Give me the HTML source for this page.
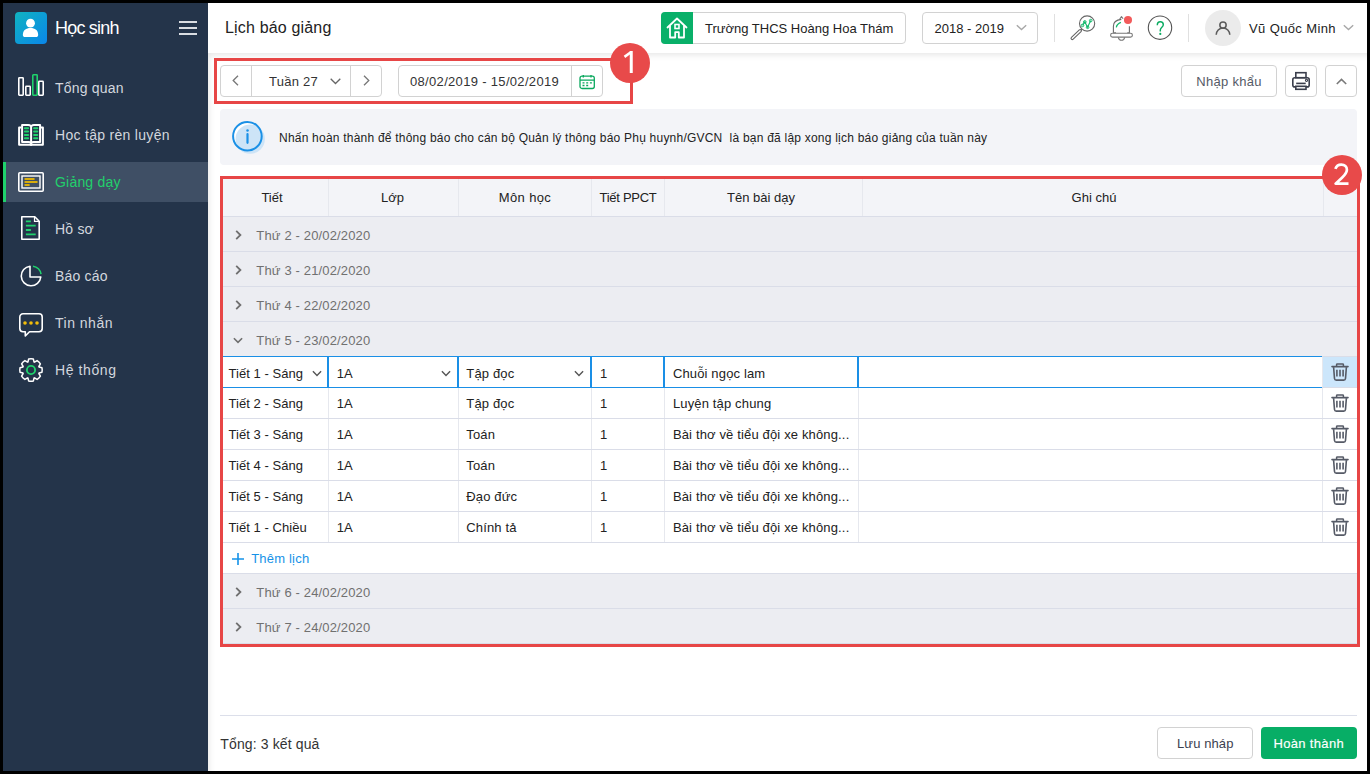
<!DOCTYPE html>
<html><head><meta charset="utf-8">
<style>
*{box-sizing:border-box;margin:0;padding:0}
html,body{width:1370px;height:774px;overflow:hidden;background:#000;font-family:"Liberation Sans",sans-serif;position:relative}
.a{position:absolute}
.t{position:absolute;white-space:pre;line-height:1}
svg{position:absolute;overflow:visible}
.nav{color:#d3d7de;font-size:14px}
.bx{position:absolute;border:1px solid #d2d2d2;border-radius:4px;background:#fff}
.vl{position:absolute;width:1px}
.hl{position:absolute;height:1px}
.c13{font-size:13px;color:#222}
.gt{font-size:13px;color:#707070}
</style></head><body>
<!-- main white area -->
<div class="a" style="left:3px;top:3px;width:1364px;height:768px;background:#fff"></div>
<!-- content shadow -->
<div class="a" style="left:208px;top:53px;width:1159px;height:718px;box-shadow:inset 4px 5px 6px -3px rgba(0,0,0,0.10)"></div>

<!-- SIDEBAR -->
<div class="a" style="left:3px;top:3px;width:205px;height:768px;background:#24344a"></div>
<div class="a" style="left:15px;top:12px;width:32px;height:32px;border-radius:4px;background:linear-gradient(135deg,#10b3c0,#0a86ea)"></div>
<svg style="left:15px;top:12px" width="32" height="32" viewBox="0 0 32 32"><circle cx="15.5" cy="11.2" r="4.4" fill="#fff"/><path d="M7.9 22.3C7.9 18.3 11 16 15.5 16S23.1 18.3 23.1 22.3v.9c0 1.1-.9 1.9-1.9 1.9H9.8c-1 0-1.9-.8-1.9-1.9z" fill="#fff"/></svg>
<div class="t" style="left:55px;top:19px;font-size:18px;color:#fff;letter-spacing:-0.8px">Học sinh</div>
<div class="a" style="left:179.2px;top:21px;width:17.7px;height:2px;background:#dadde2"></div>
<div class="a" style="left:179.2px;top:27px;width:17.7px;height:2px;background:#dadde2"></div>
<div class="a" style="left:179.2px;top:33px;width:17.7px;height:2px;background:#dadde2"></div>

<!-- active row -->
<div class="a" style="left:3px;top:162px;width:205px;height:40px;background:#3f4f65"></div>
<div class="a" style="left:3px;top:162px;width:3px;height:40px;background:#1fd26c"></div>

<div class="t nav" style="left:55px;top:81.3px;letter-spacing:0.2px">Tổng quan</div>
<div class="t nav" style="left:55px;top:128.3px;letter-spacing:0.3px">Học tập rèn luyện</div>
<div class="t nav" style="left:55px;top:175.3px;color:#22cf6c;letter-spacing:0.2px">Giảng dạy</div>
<div class="t nav" style="left:55px;top:222.3px;letter-spacing:0.2px">Hồ sơ</div>
<div class="t nav" style="left:55px;top:269.3px;letter-spacing:0.2px">Báo cáo</div>
<div class="t nav" style="left:55px;top:316.3px;letter-spacing:0.5px">Tin nhắn</div>
<div class="t nav" style="left:55px;top:363.3px;letter-spacing:0.6px">Hệ thống</div>

<!-- nav icons -->
<svg style="left:18px;top:74px" width="26" height="22" viewBox="0 0 26 22" fill="none" stroke-width="1.6">
  <rect x="0.8" y="3.8" width="4.4" height="17.4" rx="0.6" stroke="#fff"/>
  <rect x="7.8" y="12.3" width="4.4" height="8.9" rx="0.6" stroke="#fff"/>
  <rect x="14.8" y="0.8" width="4.4" height="20.4" rx="0.6" stroke="#1fd26c"/>
  <rect x="20.8" y="7.3" width="4.4" height="13.9" rx="0.6" stroke="#fff"/>
</svg>
<svg style="left:18px;top:124px" width="26" height="22" viewBox="0 0 26 22" fill="none">
  <path d="M3.3 3.6H1.1v17.2h23.8V3.6h-2.2" stroke="#fff" stroke-width="2" stroke-linejoin="round"/>
  <path d="M13.1 2.2C12.2 1.4 11.4 1 10.2 1H4.1v17h6.4c1.2 0 2 .4 2.6 1.1" stroke="#fff" stroke-width="2" stroke-linejoin="round"/>
  <path d="M13.1 2.2C14 1.4 14.8 1 16 1h6.1v17h-6.4c-1.2 0-2 .4-2.6 1.1" stroke="#fff" stroke-width="2" stroke-linejoin="round"/>
  <path d="M13.1 2v19.8" stroke="#fff" stroke-width="2"/>
  <path d="M6.9 4.2h3.2M6.9 7.5h3.2M6.9 10.9h3.2M6.9 14.2h3.2M16.1 4.2h3.2M16.1 7.5h3.2M16.1 10.9h3.2M16.1 14.2h3.2" stroke="#1fd26c" stroke-width="2" stroke-linecap="round"/>
</svg>
<svg style="left:18px;top:172px" width="26" height="20" viewBox="0 0 26 20" fill="none">
  <rect x="0.8" y="0.8" width="24.4" height="18.4" rx="1" stroke="#fff" stroke-width="1.6"/>
  <rect x="4" y="4" width="18" height="12" stroke="#fff" stroke-width="1.4"/>
  <path d="M7.3 7h8.5M7.3 9.9h11.5M7.3 13h3.6" stroke="#d9ad0c" stroke-width="2" stroke-linecap="round"/>
</svg>
<svg style="left:21px;top:216px" width="19" height="24" viewBox="0 0 19 24" fill="none">
  <path d="M0.8 0.8h13l4.4 4.4v18H0.8z" stroke="#fff" stroke-width="1.6" stroke-linejoin="round"/>
  <path d="M13.5 1v4.4h4.4" stroke="#fff" stroke-width="1.2"/>
  <path d="M4.9 5.4h5M4.9 9.6h9.8M4.9 14h5M4.9 18.4h9.8" stroke="#1fd26c" stroke-width="1.9"/>
</svg>
<svg style="left:20px;top:265px" width="22" height="22" viewBox="0 0 22 22" fill="none">
  <path d="M10 1.2A9.8 9.8 0 1 0 20.8 12H10z" stroke="#fff" stroke-width="1.6" stroke-linejoin="round"/>
  <path d="M13 1.2a9 9 0 0 1 8 8" stroke="#1fd26c" stroke-width="1.6"/>
</svg>
<svg style="left:19px;top:313px" width="24" height="24" viewBox="0 0 24 24" fill="none">
  <path d="M4 .8h16c1.8 0 3.2 1.4 3.2 3.2v11.6c0 1.8-1.4 3.2-3.2 3.2H10.5l-4.2 4.2v-4.2H4c-1.8 0-3.2-1.4-3.2-3.2V4C.8 2.2 2.2.8 4 .8z" stroke="#fff" stroke-width="1.6" stroke-linejoin="round"/>
  <circle cx="6" cy="10" r="1.8" fill="#f2bd0b"/><circle cx="12" cy="10" r="1.8" fill="#f2bd0b"/><circle cx="18" cy="10" r="1.8" fill="#f2bd0b"/>
</svg>
<svg style="left:19px;top:358px" width="24" height="24" viewBox="0 0 24 24" fill="none">
  <path d="M8.92 3.97L9.67 1.04A11.2 11.2 0 0 1 14.33 1.04L15.08 3.97A8.6 8.6 0 0 1 15.50 4.14L18.10 2.61A11.2 11.2 0 0 1 21.39 5.90L19.86 8.50A8.6 8.6 0 0 1 20.03 8.92L22.96 9.67A11.2 11.2 0 0 1 22.96 14.33L20.03 15.08A8.6 8.6 0 0 1 19.86 15.50L21.39 18.10A11.2 11.2 0 0 1 18.10 21.39L15.50 19.86A8.6 8.6 0 0 1 15.08 20.03L14.33 22.96A11.2 11.2 0 0 1 9.67 22.96L8.92 20.03A8.6 8.6 0 0 1 8.50 19.86L5.90 21.39A11.2 11.2 0 0 1 2.61 18.10L4.14 15.50A8.6 8.6 0 0 1 3.97 15.08L1.04 14.33A11.2 11.2 0 0 1 1.04 9.67L3.97 8.92A8.6 8.6 0 0 1 4.14 8.50L2.61 5.90A11.2 11.2 0 0 1 5.90 2.61L8.50 4.14A8.6 8.6 0 0 1 8.92 3.97Z" stroke="#fff" stroke-width="1.5" stroke-linejoin="round"/>
  <circle cx="12" cy="12" r="4.1" stroke="#1fd26c" stroke-width="1.9"/>
</svg>

<!-- HEADER -->
<div class="t" style="left:225px;top:20.2px;font-size:16px;color:#222;letter-spacing:0.17px">Lịch báo giảng</div>
<div class="bx" style="left:661px;top:12px;width:245px;height:32px"></div>
<div class="a" style="left:661px;top:12px;width:32px;height:32px;background:#09b069;border-radius:4px 0 0 4px"></div>
<svg style="left:661px;top:12px" width="32" height="32" viewBox="0 0 32 32" fill="none">
  <path d="M6.5 15.5L16 6.5l9.5 9" stroke="#fff" stroke-width="1.8" stroke-linecap="round" stroke-linejoin="round"/>
  <path d="M9 13.5V25.5h5.2v-5.3h3.6v5.3H23V13.5" stroke="#fff" stroke-width="1.8" stroke-linejoin="round"/>
  <rect x="14" y="12.5" width="4" height="4" stroke="#fff" stroke-width="1.6"/>
</svg>
<div class="t c13" style="left:705px;top:22px;color:#222">Trường THCS Hoàng Hoa Thám</div>
<div class="bx" style="left:922px;top:12px;width:116px;height:32px"></div>
<div class="t c13" style="left:934.5px;top:22px;color:#222">2018 - 2019</div>
<svg style="left:1015.5px;top:24px" width="11" height="7" viewBox="0 0 11 7" fill="none"><path d="M.8 1.2l4.7 4.4 4.7-4.4" stroke="#a8a8a8" stroke-width="1.4"/></svg>
<div class="vl" style="left:1054px;top:14px;height:28px;background:#e0e0e0"></div>
<div class="vl" style="left:1188px;top:14px;height:28px;background:#e0e0e0"></div>
<!-- magnifier -->
<svg style="left:1068px;top:13px" width="30" height="30" viewBox="0 0 30 30" fill="none">
  <circle cx="19.1" cy="10.5" r="7.6" stroke="#666" stroke-width="1.1"/>
  <path d="M4.3 25.3L12.2 17.8" stroke="#666" stroke-width="3.6" stroke-linecap="round"/>
  <path d="M4.3 25.3L12.2 17.8" stroke="#fff" stroke-width="1.4" stroke-linecap="round"/>
  <path d="M12.8 17.3l1.2-1.3" stroke="#666" stroke-width="1.1"/>
  <path d="M14.5 12.4l2.3-3.5 2.8 5.4 3.1-6.7" stroke="#10b86a" stroke-width="1.1"/>
  <circle cx="14.5" cy="12.4" r="1.3" stroke="#10b86a" stroke-width="1"/><circle cx="16.8" cy="8.9" r="1.3" stroke="#10b86a" stroke-width="1"/><circle cx="19.6" cy="14.3" r="1.3" stroke="#10b86a" stroke-width="1"/><circle cx="22.7" cy="7.6" r="1.3" stroke="#10b86a" stroke-width="1"/>
</svg>
<!-- bell -->
<svg style="left:1108px;top:13px" width="30" height="30" viewBox="0 0 30 30" fill="none">
  <path d="M5.4 19.8V13.2C5.4 9.6 8.3 6.9 13.3 6.4" stroke="#6a6a6a" stroke-width="1.1"/>
  <path d="M11.6 6.2l1.9-2.6 1.6 2.2" stroke="#777" stroke-width="1.1" stroke-linejoin="round"/>
  <path d="M21.4 13.3v6.5" stroke="#6a6a6a" stroke-width="1.1"/>
  <path d="M5 19.8h3M19.3 19.8h2.6" stroke="#777" stroke-width="1.1"/>
  <rect x="2.6" y="20.3" width="21.8" height="3.8" rx="1.9" stroke="#777" stroke-width="1.1"/>
  <path d="M10.3 24.3c.4 1.9 1.6 3 3.2 3s2.8-1.1 3.2-3" stroke="#777" stroke-width="1.1"/>
  <path d="M8.3 14.3C8.8 11.9 10.5 10.3 12.9 9.4" stroke="#10b86a" stroke-width="1.3"/>
  <circle cx="20" cy="7" r="4.05" fill="#f25a5a"/>
</svg>
<!-- help -->
<svg style="left:1147px;top:15px" width="26" height="26" viewBox="0 0 26 26" fill="none">
  <circle cx="13" cy="12.7" r="11.7" stroke="#555" stroke-width="1.1"/>
  <path d="M10.3 10.2c0-2.2 1.3-3.4 3-3.4s3 1.1 3 2.9c0 2.5-3 2.6-3 5.3v1.5" stroke="#0bab62" stroke-width="1.45"/>
  <circle cx="13.3" cy="18.9" r="1.1" fill="#0bab62"/>
</svg>
<!-- user -->
<div class="a" style="left:1205px;top:9.6px;width:36px;height:36px;border-radius:50%;background:#ebebeb"></div>
<svg style="left:1205px;top:9.6px" width="36" height="36" viewBox="0 0 36 36" fill="none">
  <circle cx="18" cy="15.05" r="3.15" stroke="#5c5c5c" stroke-width="1.55"/>
  <path d="M11.2 24.8A6.8 6.8 0 0 1 24.8 24.8" stroke="#5c5c5c" stroke-width="1.55"/>
</svg>
<div class="t c13" style="left:1249px;top:21.9px;color:#222;letter-spacing:0.38px">Vũ Quốc Minh</div>
<svg style="left:1342.5px;top:24px" width="11" height="7" viewBox="0 0 11 7" fill="none"><path d="M.8 1.2l4.7 4.4 4.7-4.4" stroke="#a8a8a8" stroke-width="1.4"/></svg>

<!-- TOOLBAR -->
<div class="bx" style="left:220px;top:65px;width:162px;height:32px"></div>
<div class="vl" style="left:251px;top:65px;height:32px;background:#d2d2d2"></div>
<div class="vl" style="left:350px;top:65px;height:32px;background:#d2d2d2"></div>
<svg style="left:232px;top:75px" width="7" height="11" viewBox="0 0 7 11" fill="none"><path d="M6 .7L1.2 5.5 6 10.3" stroke="#777" stroke-width="1.3"/></svg>
<svg style="left:363px;top:75px" width="7" height="11" viewBox="0 0 7 11" fill="none"><path d="M1 .7l4.8 4.8L1 10.3" stroke="#777" stroke-width="1.3"/></svg>
<div class="t c13" style="left:269px;top:74.5px;color:#333;letter-spacing:0.25px">Tuần 27</div>
<svg style="left:330px;top:78px" width="11" height="7" viewBox="0 0 11 7" fill="none"><path d="M.7.7l4.8 4.8L10.3.7" stroke="#666" stroke-width="1.3"/></svg>
<div class="bx" style="left:398px;top:65px;width:205px;height:32px"></div>
<div class="vl" style="left:571px;top:65px;height:32px;background:#d2d2d2"></div>
<div class="t c13" style="left:410px;top:74.6px;color:#333;letter-spacing:0.32px">08/02/2019 - 15/02/2019</div>
<svg style="left:579px;top:74px" width="17" height="16" viewBox="0 0 17 16" fill="none">
  <rect x="1" y="2.2" width="14.3" height="12.3" rx="2" stroke="#0aa85e" stroke-width="1.3"/>
  <path d="M1 6.1h14.3M4.3 1v2.5M12 1v2.5" stroke="#0aa85e" stroke-width="1.3"/>
  <path d="M3.5 8.9h2M7.2 8.9h2M10.9 8.9h2M3.5 11.5h2M7.2 11.5h2" stroke="#0aa85e" stroke-width="1.3"/>
</svg>
<!-- right toolbar -->
<div class="bx" style="left:1181px;top:65px;width:96px;height:32px"></div>
<div class="t c13" style="left:1196.3px;top:75px;color:#555a66;letter-spacing:0.3px">Nhập khẩu</div>
<div class="bx" style="left:1285px;top:65px;width:32px;height:32px"></div>
<svg style="left:1290px;top:70px" width="22" height="22" viewBox="0 0 22 22" fill="none">
  <rect x="5.8" y="2.7" width="10.2" height="5" stroke="#3a3e4c" stroke-width="1.6"/>
  <rect x="2.8" y="7.8" width="16.4" height="9.1" rx="2" stroke="#3a3e4c" stroke-width="1.6"/>
  <rect x="5.8" y="16.3" width="10.2" height="3" fill="#fff" stroke="#3a3e4c" stroke-width="1.6"/>
  <path d="M6.2 13.4h9.5" stroke="#3a3e4c" stroke-width="1.6"/>
  <circle cx="16.5" cy="10.3" r="1.1" stroke="#3a3e4c" stroke-width="1.1"/>
</svg>
<div class="bx" style="left:1325px;top:65px;width:32px;height:32px"></div>
<svg style="left:1336px;top:78px" width="11" height="7" viewBox="0 0 11 7" fill="none"><path d="M.8 6l4.7-4.6L10.2 6" stroke="#7a7a7a" stroke-width="1.6"/></svg>

<!-- annotation 1 -->
<div class="a" style="left:214px;top:58px;width:419px;height:46px;border:3px solid #e74646"></div>
<div class="a" style="left:610px;top:42.6px;width:40px;height:40px;border-radius:50%;background:#e84a4a"></div>
<svg style="left:610px;top:42px" width="40" height="40" viewBox="0 0 40 40" fill="none"><path d="M21.25 9v22" stroke="#fff" stroke-width="3"/><path d="M20.8 10.3l-6.3 4.6" stroke="#fff" stroke-width="2.6"/></svg>

<!-- INFO -->
<div class="a" style="left:220px;top:109px;width:1137px;height:56px;background:#f3f4f8;border-radius:4px"></div>
<svg style="left:231px;top:120px" width="36" height="36" viewBox="0 0 36 36" fill="none">
  <circle cx="16.4" cy="16.2" r="14.3" fill="#fff"/>
  <circle cx="19.2" cy="19.1" r="14.7" fill="#cde4f7"/>
  <circle cx="16.4" cy="16.2" r="14.3" stroke="#1a90e6" stroke-width="2"/>
  <circle cx="16.5" cy="10.4" r="1.25" fill="#1a90e6"/>
  <path d="M16.5 14v8.8" stroke="#1a90e6" stroke-width="2.2" stroke-linecap="round"/>
</svg>
<div class="t" style="left:279px;top:131.5px;font-size:12px;color:#222;letter-spacing:0.22px">Nhấn hoàn thành để thông báo cho cán bộ Quản lý thông báo Phụ huynh/GVCN  là bạn đã lập xong lịch báo giảng của tuần này</div>

<!-- TABLE -->
<div class="a" style="left:223px;top:179px;width:1134px;height:37px;background:#f3f4f8;"></div>
<div class="a" style="left:223px;top:216px;width:1134px;height:1px;background:#dadde8;"></div>
<div class="a" style="left:328px;top:179px;width:1px;height:37px;background:#e6e8ee;"></div>
<div class="a" style="left:458px;top:179px;width:1px;height:37px;background:#e6e8ee;"></div>
<div class="a" style="left:591px;top:179px;width:1px;height:37px;background:#e6e8ee;"></div>
<div class="a" style="left:664px;top:179px;width:1px;height:37px;background:#e6e8ee;"></div>
<div class="a" style="left:862px;top:179px;width:1px;height:37px;background:#e6e8ee;"></div>
<div class="a" style="left:1323px;top:179px;width:1px;height:37px;background:#e6e8ee;"></div>
<div class="t" style="left:172px;width:200px;text-align:center;top:190.8px;font-size:13px;color:#222;letter-spacing:0px">Tiết</div>
<div class="t" style="left:292.6px;width:200px;text-align:center;top:190.8px;font-size:13px;color:#222;letter-spacing:0px">Lớp</div>
<div class="t" style="left:425px;width:200px;text-align:center;top:190.8px;font-size:13px;color:#222;letter-spacing:0.35px">Môn học</div>
<div class="t" style="left:528px;width:200px;text-align:center;top:190.8px;font-size:13px;color:#222;letter-spacing:-0.3px">Tiết PPCT</div>
<div class="t" style="left:661px;width:200px;text-align:center;top:190.8px;font-size:13px;color:#222;letter-spacing:0px">Tên bài dạy</div>
<div class="t" style="left:994px;width:200px;text-align:center;top:190.8px;font-size:13px;color:#222;letter-spacing:0px">Ghi chú</div>
<div class="a" style="left:223px;top:217px;width:1134px;height:34px;background:#ecedf2;"></div>
<div class="a" style="left:223px;top:251px;width:1134px;height:1px;background:#dadde8;"></div>
<svg style="left:234.5px;top:230px" width="7" height="10" viewBox="0 0 7 10" fill="none"><path d="M1.2 .9l4.2 4.1-4.2 4.1" stroke="#6f6f6f" stroke-width="1.8"/></svg>
<div class="t" style="left:256.3px;top:229.0px;font-size:13px;color:#707070;letter-spacing:0.15px;">Thứ 2 - 20/02/2020</div>
<div class="a" style="left:223px;top:252px;width:1134px;height:34px;background:#ecedf2;"></div>
<div class="a" style="left:223px;top:286px;width:1134px;height:1px;background:#dadde8;"></div>
<svg style="left:234.5px;top:265px" width="7" height="10" viewBox="0 0 7 10" fill="none"><path d="M1.2 .9l4.2 4.1-4.2 4.1" stroke="#6f6f6f" stroke-width="1.8"/></svg>
<div class="t" style="left:256.3px;top:264.0px;font-size:13px;color:#707070;letter-spacing:0.15px;">Thứ 3 - 21/02/2020</div>
<div class="a" style="left:223px;top:287px;width:1134px;height:34px;background:#ecedf2;"></div>
<div class="a" style="left:223px;top:321px;width:1134px;height:1px;background:#dadde8;"></div>
<svg style="left:234.5px;top:300px" width="7" height="10" viewBox="0 0 7 10" fill="none"><path d="M1.2 .9l4.2 4.1-4.2 4.1" stroke="#6f6f6f" stroke-width="1.8"/></svg>
<div class="t" style="left:256.3px;top:299.0px;font-size:13px;color:#707070;letter-spacing:0.15px;">Thứ 4 - 22/02/2020</div>
<div class="a" style="left:223px;top:322px;width:1134px;height:34px;background:#ecedf2;"></div>
<div class="a" style="left:223px;top:356px;width:1134px;height:1px;background:#dadde8;"></div>
<svg style="left:233px;top:336.5px" width="10" height="7" viewBox="0 0 10 7" fill="none"><path d="M.9 1.2L5 5.4l4.1-4.2" stroke="#6f6f6f" stroke-width="1.6"/></svg>
<div class="t" style="left:256.3px;top:334.0px;font-size:13px;color:#707070;letter-spacing:0.15px;">Thứ 5 - 23/02/2020</div>
<div class="a" style="left:1323px;top:357px;width:34px;height:30px;background:#cce6fb;"></div>
<div class="a" style="left:223px;top:387px;width:1134px;height:1px;background:#dadde8;"></div>
<div class="a" style="left:328px;top:357px;width:1px;height:30px;background:#e6e8ee;"></div>
<div class="a" style="left:458px;top:357px;width:1px;height:30px;background:#e6e8ee;"></div>
<div class="a" style="left:591px;top:357px;width:1px;height:30px;background:#e6e8ee;"></div>
<div class="a" style="left:664px;top:357px;width:1px;height:30px;background:#e6e8ee;"></div>
<div class="a" style="left:858px;top:357px;width:1px;height:30px;background:#e6e8ee;"></div>
<div class="a" style="left:1322px;top:357px;width:1px;height:30px;background:#e6e8ee;"></div>
<div class="t" style="left:228.5px;top:366.5px;font-size:13px;color:#222;letter-spacing:0.05px;">Tiết 1 - Sáng</div>
<div class="t" style="left:336.7px;top:366.5px;font-size:13px;color:#222;letter-spacing:0.15px;">1A</div>
<div class="t" style="left:466.3px;top:366.5px;font-size:13px;color:#222;letter-spacing:0.15px;">Tập đọc</div>
<div class="t" style="left:600px;top:366.5px;font-size:13px;color:#222;letter-spacing:0.15px;">1</div>
<div class="t" style="left:672.9px;top:366.5px;font-size:13px;color:#222;letter-spacing:0.15px;">Chuỗi ngọc lam</div>
<svg style="left:1331px;top:362.8px" width="18" height="18" viewBox="0 0 18 18" fill="none"><path d="M1 3.6h16" stroke="#555a66" stroke-width="1.6" stroke-linecap="round"/><path d="M5.6 3.2V1.6c0-.4.3-.7.7-.7h5.4c.4 0 .7.3.7.7v1.6" stroke="#555a66" stroke-width="1.5"/><path d="M2.6 4.1l.9 11.4c.1 1 .8 1.6 1.7 1.6h7.6c.9 0 1.6-.6 1.7-1.6l.9-11.4" stroke="#555a66" stroke-width="1.6"/><path d="M5.9 6.8v6.7M9 6.8v6.7M12.1 6.8v6.7" stroke="#555a66" stroke-width="1.6"/></svg>
<div class="a" style="left:223px;top:418px;width:1134px;height:1px;background:#dadde8;"></div>
<div class="a" style="left:328px;top:388px;width:1px;height:30px;background:#e6e8ee;"></div>
<div class="a" style="left:458px;top:388px;width:1px;height:30px;background:#e6e8ee;"></div>
<div class="a" style="left:591px;top:388px;width:1px;height:30px;background:#e6e8ee;"></div>
<div class="a" style="left:664px;top:388px;width:1px;height:30px;background:#e6e8ee;"></div>
<div class="a" style="left:858px;top:388px;width:1px;height:30px;background:#e6e8ee;"></div>
<div class="a" style="left:1322px;top:388px;width:1px;height:30px;background:#e6e8ee;"></div>
<div class="t" style="left:228.5px;top:396.6px;font-size:13px;color:#222;letter-spacing:0.05px;">Tiết 2 - Sáng</div>
<div class="t" style="left:336.7px;top:396.6px;font-size:13px;color:#222;letter-spacing:0.15px;">1A</div>
<div class="t" style="left:466.3px;top:396.6px;font-size:13px;color:#222;letter-spacing:0.15px;">Tập đọc</div>
<div class="t" style="left:600px;top:396.6px;font-size:13px;color:#222;letter-spacing:0.15px;">1</div>
<div class="t" style="left:672.9px;top:396.6px;font-size:13px;color:#222;letter-spacing:0.15px;">Luyện tập chung</div>
<svg style="left:1331px;top:393.8px" width="18" height="18" viewBox="0 0 18 18" fill="none"><path d="M1 3.6h16" stroke="#555a66" stroke-width="1.6" stroke-linecap="round"/><path d="M5.6 3.2V1.6c0-.4.3-.7.7-.7h5.4c.4 0 .7.3.7.7v1.6" stroke="#555a66" stroke-width="1.5"/><path d="M2.6 4.1l.9 11.4c.1 1 .8 1.6 1.7 1.6h7.6c.9 0 1.6-.6 1.7-1.6l.9-11.4" stroke="#555a66" stroke-width="1.6"/><path d="M5.9 6.8v6.7M9 6.8v6.7M12.1 6.8v6.7" stroke="#555a66" stroke-width="1.6"/></svg>
<div class="a" style="left:223px;top:449px;width:1134px;height:1px;background:#dadde8;"></div>
<div class="a" style="left:328px;top:419px;width:1px;height:30px;background:#e6e8ee;"></div>
<div class="a" style="left:458px;top:419px;width:1px;height:30px;background:#e6e8ee;"></div>
<div class="a" style="left:591px;top:419px;width:1px;height:30px;background:#e6e8ee;"></div>
<div class="a" style="left:664px;top:419px;width:1px;height:30px;background:#e6e8ee;"></div>
<div class="a" style="left:858px;top:419px;width:1px;height:30px;background:#e6e8ee;"></div>
<div class="a" style="left:1322px;top:419px;width:1px;height:30px;background:#e6e8ee;"></div>
<div class="t" style="left:228.5px;top:427.6px;font-size:13px;color:#222;letter-spacing:0.05px;">Tiết 3 - Sáng</div>
<div class="t" style="left:336.7px;top:427.6px;font-size:13px;color:#222;letter-spacing:0.15px;">1A</div>
<div class="t" style="left:466.3px;top:427.6px;font-size:13px;color:#222;letter-spacing:0.15px;">Toán</div>
<div class="t" style="left:600px;top:427.6px;font-size:13px;color:#222;letter-spacing:0.15px;">1</div>
<div class="t" style="left:672.9px;top:427.6px;font-size:13px;color:#222;letter-spacing:0.15px;">Bài thơ về tiểu đội xe không...</div>
<svg style="left:1331px;top:424.8px" width="18" height="18" viewBox="0 0 18 18" fill="none"><path d="M1 3.6h16" stroke="#555a66" stroke-width="1.6" stroke-linecap="round"/><path d="M5.6 3.2V1.6c0-.4.3-.7.7-.7h5.4c.4 0 .7.3.7.7v1.6" stroke="#555a66" stroke-width="1.5"/><path d="M2.6 4.1l.9 11.4c.1 1 .8 1.6 1.7 1.6h7.6c.9 0 1.6-.6 1.7-1.6l.9-11.4" stroke="#555a66" stroke-width="1.6"/><path d="M5.9 6.8v6.7M9 6.8v6.7M12.1 6.8v6.7" stroke="#555a66" stroke-width="1.6"/></svg>
<div class="a" style="left:223px;top:480px;width:1134px;height:1px;background:#dadde8;"></div>
<div class="a" style="left:328px;top:450px;width:1px;height:30px;background:#e6e8ee;"></div>
<div class="a" style="left:458px;top:450px;width:1px;height:30px;background:#e6e8ee;"></div>
<div class="a" style="left:591px;top:450px;width:1px;height:30px;background:#e6e8ee;"></div>
<div class="a" style="left:664px;top:450px;width:1px;height:30px;background:#e6e8ee;"></div>
<div class="a" style="left:858px;top:450px;width:1px;height:30px;background:#e6e8ee;"></div>
<div class="a" style="left:1322px;top:450px;width:1px;height:30px;background:#e6e8ee;"></div>
<div class="t" style="left:228.5px;top:458.6px;font-size:13px;color:#222;letter-spacing:0.05px;">Tiết 4 - Sáng</div>
<div class="t" style="left:336.7px;top:458.6px;font-size:13px;color:#222;letter-spacing:0.15px;">1A</div>
<div class="t" style="left:466.3px;top:458.6px;font-size:13px;color:#222;letter-spacing:0.15px;">Toán</div>
<div class="t" style="left:600px;top:458.6px;font-size:13px;color:#222;letter-spacing:0.15px;">1</div>
<div class="t" style="left:672.9px;top:458.6px;font-size:13px;color:#222;letter-spacing:0.15px;">Bài thơ về tiểu đội xe không...</div>
<svg style="left:1331px;top:455.8px" width="18" height="18" viewBox="0 0 18 18" fill="none"><path d="M1 3.6h16" stroke="#555a66" stroke-width="1.6" stroke-linecap="round"/><path d="M5.6 3.2V1.6c0-.4.3-.7.7-.7h5.4c.4 0 .7.3.7.7v1.6" stroke="#555a66" stroke-width="1.5"/><path d="M2.6 4.1l.9 11.4c.1 1 .8 1.6 1.7 1.6h7.6c.9 0 1.6-.6 1.7-1.6l.9-11.4" stroke="#555a66" stroke-width="1.6"/><path d="M5.9 6.8v6.7M9 6.8v6.7M12.1 6.8v6.7" stroke="#555a66" stroke-width="1.6"/></svg>
<div class="a" style="left:223px;top:511px;width:1134px;height:1px;background:#dadde8;"></div>
<div class="a" style="left:328px;top:481px;width:1px;height:30px;background:#e6e8ee;"></div>
<div class="a" style="left:458px;top:481px;width:1px;height:30px;background:#e6e8ee;"></div>
<div class="a" style="left:591px;top:481px;width:1px;height:30px;background:#e6e8ee;"></div>
<div class="a" style="left:664px;top:481px;width:1px;height:30px;background:#e6e8ee;"></div>
<div class="a" style="left:858px;top:481px;width:1px;height:30px;background:#e6e8ee;"></div>
<div class="a" style="left:1322px;top:481px;width:1px;height:30px;background:#e6e8ee;"></div>
<div class="t" style="left:228.5px;top:489.6px;font-size:13px;color:#222;letter-spacing:0.05px;">Tiết 5 - Sáng</div>
<div class="t" style="left:336.7px;top:489.6px;font-size:13px;color:#222;letter-spacing:0.15px;">1A</div>
<div class="t" style="left:466.3px;top:489.6px;font-size:13px;color:#222;letter-spacing:0.15px;">Đạo đức</div>
<div class="t" style="left:600px;top:489.6px;font-size:13px;color:#222;letter-spacing:0.15px;">1</div>
<div class="t" style="left:672.9px;top:489.6px;font-size:13px;color:#222;letter-spacing:0.15px;">Bài thơ về tiểu đội xe không...</div>
<svg style="left:1331px;top:486.8px" width="18" height="18" viewBox="0 0 18 18" fill="none"><path d="M1 3.6h16" stroke="#555a66" stroke-width="1.6" stroke-linecap="round"/><path d="M5.6 3.2V1.6c0-.4.3-.7.7-.7h5.4c.4 0 .7.3.7.7v1.6" stroke="#555a66" stroke-width="1.5"/><path d="M2.6 4.1l.9 11.4c.1 1 .8 1.6 1.7 1.6h7.6c.9 0 1.6-.6 1.7-1.6l.9-11.4" stroke="#555a66" stroke-width="1.6"/><path d="M5.9 6.8v6.7M9 6.8v6.7M12.1 6.8v6.7" stroke="#555a66" stroke-width="1.6"/></svg>
<div class="a" style="left:223px;top:542px;width:1134px;height:1px;background:#dadde8;"></div>
<div class="a" style="left:328px;top:512px;width:1px;height:30px;background:#e6e8ee;"></div>
<div class="a" style="left:458px;top:512px;width:1px;height:30px;background:#e6e8ee;"></div>
<div class="a" style="left:591px;top:512px;width:1px;height:30px;background:#e6e8ee;"></div>
<div class="a" style="left:664px;top:512px;width:1px;height:30px;background:#e6e8ee;"></div>
<div class="a" style="left:858px;top:512px;width:1px;height:30px;background:#e6e8ee;"></div>
<div class="a" style="left:1322px;top:512px;width:1px;height:30px;background:#e6e8ee;"></div>
<div class="t" style="left:228.5px;top:520.6px;font-size:13px;color:#222;letter-spacing:0.05px;">Tiết 1 - Chiều</div>
<div class="t" style="left:336.7px;top:520.6px;font-size:13px;color:#222;letter-spacing:0.15px;">1A</div>
<div class="t" style="left:466.3px;top:520.6px;font-size:13px;color:#222;letter-spacing:0.15px;">Chính tả</div>
<div class="t" style="left:600px;top:520.6px;font-size:13px;color:#222;letter-spacing:0.15px;">1</div>
<div class="t" style="left:672.9px;top:520.6px;font-size:13px;color:#222;letter-spacing:0.15px;">Bài thơ về tiểu đội xe không...</div>
<svg style="left:1331px;top:517.8px" width="18" height="18" viewBox="0 0 18 18" fill="none"><path d="M1 3.6h16" stroke="#555a66" stroke-width="1.6" stroke-linecap="round"/><path d="M5.6 3.2V1.6c0-.4.3-.7.7-.7h5.4c.4 0 .7.3.7.7v1.6" stroke="#555a66" stroke-width="1.5"/><path d="M2.6 4.1l.9 11.4c.1 1 .8 1.6 1.7 1.6h7.6c.9 0 1.6-.6 1.7-1.6l.9-11.4" stroke="#555a66" stroke-width="1.6"/><path d="M5.9 6.8v6.7M9 6.8v6.7M12.1 6.8v6.7" stroke="#555a66" stroke-width="1.6"/></svg>
<div class="a" style="left:223px;top:356px;width:1099px;height:1px;background:#1a8fe6;"></div>
<div class="a" style="left:223px;top:387px;width:1099px;height:1px;background:#1a8fe6;"></div>
<div class="a" style="left:327px;top:356px;width:2px;height:32px;background:#1a8fe6;"></div>
<div class="a" style="left:457px;top:356px;width:2px;height:32px;background:#1a8fe6;"></div>
<div class="a" style="left:590px;top:356px;width:2px;height:32px;background:#1a8fe6;"></div>
<div class="a" style="left:663px;top:356px;width:2px;height:32px;background:#1a8fe6;"></div>
<div class="a" style="left:857px;top:356px;width:2px;height:32px;background:#1a8fe6;"></div>
<svg style="left:311.5px;top:370px" width="10" height="7" viewBox="0 0 10 7" fill="none"><path d="M.9 1.2L5 5.4l4.1-4.2" stroke="#555" stroke-width="1.4"/></svg>
<svg style="left:441.3px;top:370px" width="10" height="7" viewBox="0 0 10 7" fill="none"><path d="M.9 1.2L5 5.4l4.1-4.2" stroke="#555" stroke-width="1.4"/></svg>
<svg style="left:574px;top:370px" width="10" height="7" viewBox="0 0 10 7" fill="none"><path d="M.9 1.2L5 5.4l4.1-4.2" stroke="#555" stroke-width="1.4"/></svg>
<div class="a" style="left:223px;top:573px;width:1134px;height:1px;background:#dadde8;"></div>
<svg style="left:232px;top:553px" width="12" height="12" viewBox="0 0 12 12" fill="none"><path d="M6 0v12M0 6h12" stroke="#1592e8" stroke-width="1.6"/></svg>
<div class="t" style="left:251.2px;top:551.8px;font-size:13px;color:#1592e8;letter-spacing:0.2px;">Thêm lịch</div>
<div class="a" style="left:223px;top:574px;width:1134px;height:34px;background:#ecedf2;"></div>
<div class="a" style="left:223px;top:608px;width:1134px;height:1px;background:#dadde8;"></div>
<svg style="left:234.5px;top:587px" width="7" height="10" viewBox="0 0 7 10" fill="none"><path d="M1.2 .9l4.2 4.1-4.2 4.1" stroke="#6f6f6f" stroke-width="1.8"/></svg>
<div class="t" style="left:256.3px;top:586.0px;font-size:13px;color:#707070;letter-spacing:0.15px;">Thứ 6 - 24/02/2020</div>
<div class="a" style="left:223px;top:609px;width:1134px;height:34px;background:#ecedf2;"></div>
<div class="a" style="left:223px;top:643px;width:1134px;height:1px;background:#dadde8;"></div>
<svg style="left:234.5px;top:622px" width="7" height="10" viewBox="0 0 7 10" fill="none"><path d="M1.2 .9l4.2 4.1-4.2 4.1" stroke="#6f6f6f" stroke-width="1.8"/></svg>
<div class="t" style="left:256.3px;top:621.0px;font-size:13px;color:#707070;letter-spacing:0.15px;">Thứ 7 - 24/02/2020</div>
<div class="a" style="left:220px;top:176px;width:1140px;height:471px;border:3px solid #e74646"></div>
<div class="a" style="left:1322px;top:155px;width:40px;height:40px;border-radius:50%;background:#e84a4a"></div>
<svg style="left:1322px;top:155px" width="40" height="40" viewBox="0 0 40 40" fill="none"><path d="M13.4 13.9C14.5 10.4 16.7 9.6 19.3 9.6c3.4 0 5.6 2 5.6 5.1 0 3.1-1.9 5.1-4.9 8L13.6 28.7h12.9" stroke="#fff" stroke-width="2.7" stroke-linejoin="round"/></svg>

<!-- FOOTER -->
<div class="hl" style="left:220px;top:715px;width:1137px;background:#dcdfea"></div>
<div class="t" style="left:220.3px;top:737.1px;font-size:14px;color:#333;letter-spacing:0.13px">Tổng: 3 kết quả</div>
<div class="bx" style="left:1157px;top:727px;width:96px;height:32px"></div>
<div class="t c13" style="left:1177px;top:737px;color:#3d4150;letter-spacing:0.1px">Lưu nháp</div>
<div class="a" style="left:1261px;top:727px;width:96px;height:32px;background:#07ae66;border-radius:4px"></div>
<div class="t c13" style="left:1273.5px;top:737px;color:#fff;letter-spacing:0.33px;-webkit-text-stroke:0.15px #fff">Hoàn thành</div>
</body></html>
